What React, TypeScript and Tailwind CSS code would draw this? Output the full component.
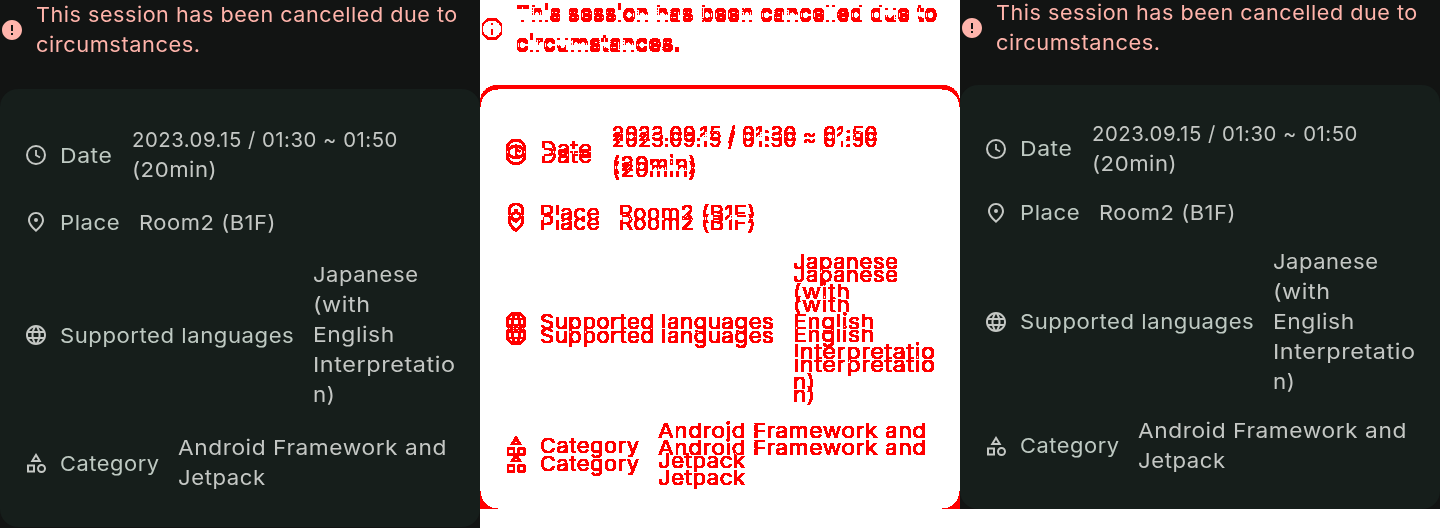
import type { ReactNode } from "react";
import { MdError, MdLanguage, MdOutlineCategory } from "react-icons/md";

const ClockIcon = () => (
  <svg width="24" height="24" viewBox="0 0 24 24" fill="none" stroke="currentColor" strokeWidth="2">
    <circle cx="12" cy="12" r="9" />
    <path d="M12 7v5.2l4 2.4" strokeWidth="1.8" />
  </svg>
);

const PinIcon = () => (
  <svg width="24" height="24" viewBox="0 0 24 24" fill="currentColor">
    <path
      fillRule="evenodd"
      d="M12 22C6.7 17.4 4 13.5 4 10.2 4 5.2 7.8 2 12 2s8 3.2 8 8.200C20 13.500 17.300 17.400 12 22Zm0-2.650C16 15.700 18 12.600 18 10.200 18 6.600 15.400 4 12 4S6 6.600 6 10.200C6 12.600 8 15.700 12 19.350Z"
    />
    <circle cx="12" cy="10" r="2" />
  </svg>
);

function Line({ fit, children }: { fit: string; children: string }) {
  return <div className={`w-max origin-left whitespace-nowrap ${fit}`}>{children}</div>;
}

interface RowProps {
  icon: ReactNode;
  label: string;
  labelFit: string;
  labelWidth: string;
  labelPad: string;
  valuePad?: string;
  className?: string;
  children: ReactNode;
}

function Row({ icon, label, labelFit, labelWidth, labelPad, valuePad = "", className = "", children }: RowProps) {
  return (
    <div className={`flex items-center pl-6 ${className}`}>
      <div className="w-9 shrink-0 text-[#c4c7c4]">{icon}</div>
      <div className={`-my-px shrink-0 text-[#bec9c2] ${labelWidth} ${labelPad}`}>
        <Line fit={labelFit}>{label}</Line>
      </div>
      <div className={`min-w-0 text-[#c4c7c4] ${valuePad}`}>{children}</div>
    </div>
  );
}

interface SessionProps {
  messageTop: string;
  cardGap: string;
  cardPad: string;
  labelPad: string;
  placePad: string;
  placeGap: string;
  languageGap: string;
  categoryGap: string;
  height: string;
  cardHeight: string;
}

const before: SessionProps = {
  messageTop: "pt-0",
  cardGap: "mt-[29px]",
  cardPad: "pt-9",
  labelPad: "pt-[2px]",
  placePad: "-my-px pt-[2px]",
  placeGap: "mt-[22px]",
  languageGap: "mt-[23px]",
  categoryGap: "mt-[23px]",
  height: "h-[528px]",
  cardHeight: "h-[438px]",
};

const after: SessionProps = {
  messageTop: "-mt-[2px]",
  cardGap: "mt-[27px]",
  cardPad: "pt-[34px]",
  labelPad: "pt-0",
  placePad: "pt-0",
  placeGap: "mt-[19px]",
  languageGap: "mt-[19px]",
  categoryGap: "mt-[19px]",
  height: "h-[509px]",
  cardHeight: "h-[424px]",
};

function Session(p: SessionProps) {
  return (
    <div className={`flow-root w-[480px] overflow-hidden bg-[#121413] text-[20.5px] leading-[30px] tracking-[0.5px] ${p.height}`}>
      <div className={`flex items-center text-[#ffb4ab] ${p.messageTop}`}>
        <MdError size={24} className="mr-3 shrink-0" />
        <div>
          <Line fit="scale-x-[1.053]">This session has been cancelled due to</Line>
          <Line fit="scale-x-[1.065]">circumstances.</Line>
        </div>
      </div>
      <div className={`rounded-[18px] bg-[#161e1b] ${p.cardGap} ${p.cardPad} ${p.cardHeight}`}>
        <Row icon={<ClockIcon />} label="Date" labelFit="scale-x-[1.12]" labelWidth="w-[72px]" labelPad={p.labelPad}>
          <Line fit="scale-x-[0.9925]">2023.09.15 / 01:30 ~ 01:50</Line>
          <Line fit="scale-x-[1.08]">(20min)</Line>
        </Row>
        <Row icon={<PinIcon />} label="Place" labelFit="scale-x-[1.08]" labelWidth="w-[79px]" labelPad={p.labelPad} valuePad={p.placePad} className={p.placeGap}>
          <Line fit="scale-x-[1.071]">Room2 (B1F)</Line>
        </Row>
        <Row icon={<MdLanguage size={24} />} label="Supported languages" labelFit="scale-x-[1.079]" labelWidth="w-[253px]" labelPad={p.labelPad} className={p.languageGap}>
          <Line fit="scale-x-[1.073]">Japanese</Line>
          <Line fit="scale-x-[1.14]">(with</Line>
          <Line fit="scale-x-[1.115]">English</Line>
          <Line fit="scale-x-[1.144]">Interpretatio</Line>
          <Line fit="scale-x-[1.09]">n)</Line>
        </Row>
        <Row icon={<MdOutlineCategory size={24} />} label="Category" labelFit="scale-x-[1.067]" labelWidth="w-[118px]" labelPad={p.labelPad} className={p.categoryGap}>
          <Line fit="scale-x-[1.109]">Android Framework and</Line>
          <Line fit="scale-x-[1.08]">Jetpack</Line>
        </Row>
      </div>
    </div>
  );
}

// Overlays both versions and paints every differing pixel red on white.
function Difference() {
  return (
    <div className="isolate grid h-[509px] overflow-hidden [filter:url(#changed-pixels)]">
      <div className="col-start-1 row-start-1">
        <Session {...before} />
      </div>
      <div className="col-start-1 row-start-1 mix-blend-difference">
        <Session {...after} />
      </div>
      <svg width="0" height="0" className="absolute">
        <filter id="changed-pixels" x="0" y="0" width="100%" height="100%" colorInterpolationFilters="sRGB">
          <feColorMatrix values="0 0 0 0 1  -90 -90 -90 0 1  -90 -90 -90 0 1  0 0 0 0 1" />
        </filter>
      </svg>
    </div>
  );
}

export default function App() {
  return (
    <main className="grid h-[528px] w-[1440px] grid-cols-3 items-start overflow-hidden bg-white font-['Inter','Liberation_Sans',sans-serif]">
      <Session {...before} />
      <Difference />
      <Session {...after} />
    </main>
  );
}
